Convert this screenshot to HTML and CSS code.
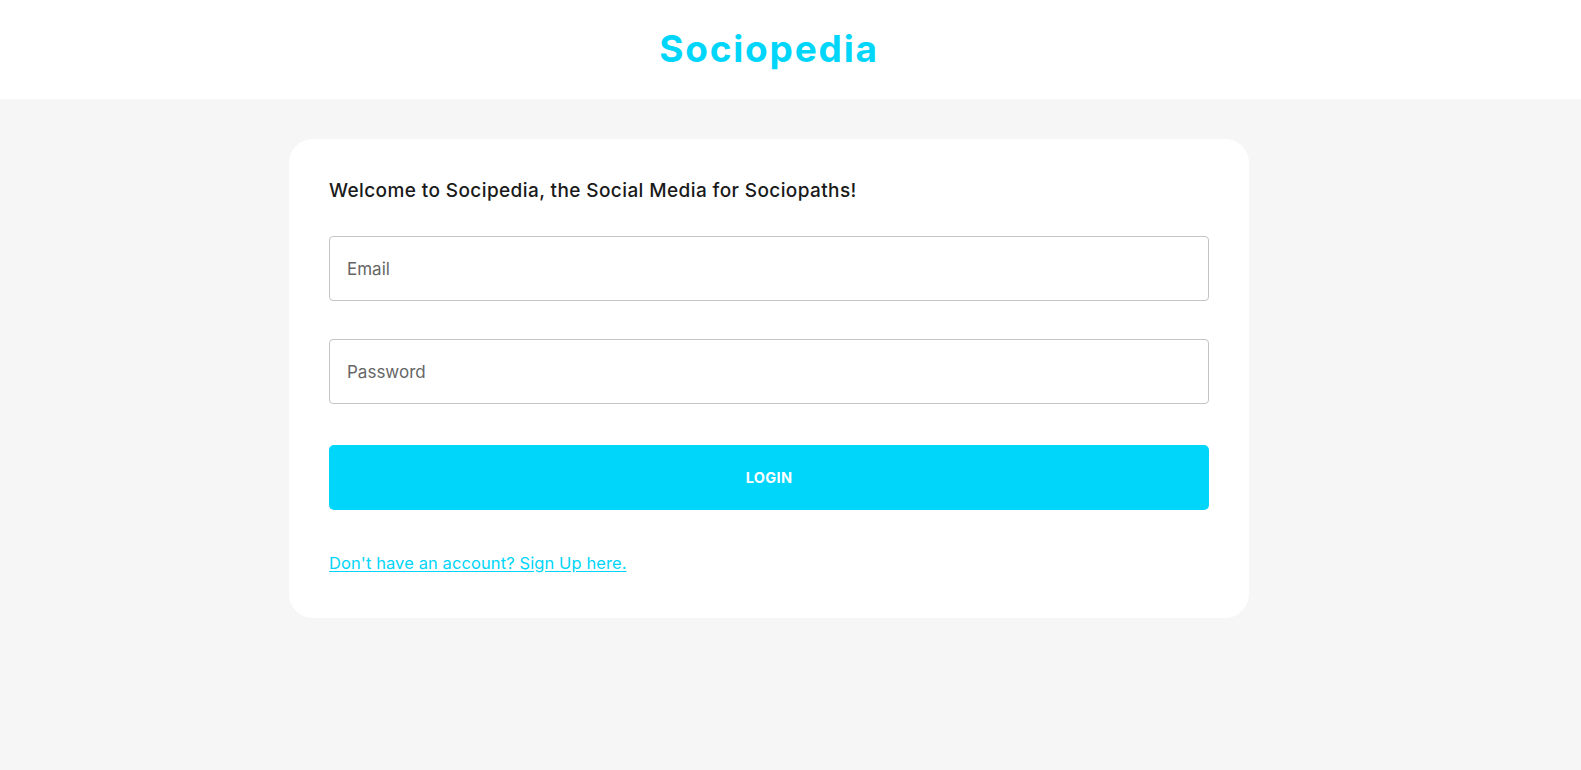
FILE: index.html
```html
<!DOCTYPE html>
<html lang="en">
<head>
<meta charset="utf-8">
<title>Sociopedia</title>
<link rel="stylesheet" href="styles.css">
</head>
<body>
<header class="topbar">
  <div class="topbar-inner">
    <h1 class="brand">Sociopedia</h1>
  </div>
</header>
<main class="page">
  <section class="card">
    <h2 class="welcome">Welcome to Socipedia, the Social Media for Sociopaths!</h2>
    <form class="form">
      <input class="field field-email" type="text" placeholder="Email">
      <input class="field field-password" type="password" placeholder="Password">
      <button class="login" type="button">LOGIN</button>
      <a class="switch" href="#">Don't have an account? Sign Up here.</a>
    </form>
  </section>
</main>
</body>
</html>
```
FILE: styles.css
```css
* { box-sizing: border-box; }
html, body {
  margin: 0;
  padding: 0;
  background: #f6f6f6;
  font-family: Inter, "Noto Sans", sans-serif;
  color: #1a1a1a;
  height: 100%;
}
.topbar {
  background: #ffffff;
  height: 99px;
}
.topbar-inner {
  width: 1538px;
  height: 100%;
  display: flex;
  justify-content: center;
  align-items: center;
}
.brand {
  margin: 0;
  font-size: 37px;
  font-weight: 700;
  color: #00d5fa;
  line-height: 1;
  letter-spacing: 1.8px;
  padding-bottom: 2px;
}
.page {
  width: 1538px;
  padding-top: 40px;
}
.card {
  width: 960px;
  margin: 0 auto;
  background: #ffffff;
  border-radius: 24px;
  padding: 39px 40px 44px;
}
.welcome {
  margin: 0 0 32px;
  font-size: 19px;
  line-height: 26px;
  font-weight: 500;
  letter-spacing: 0.4px;
  color: #1a1a1a;
}
.form {
  display: flex;
  flex-direction: column;
}
.field {
  height: 65px;
  border: 1px solid #c4c4c4;
  border-radius: 4px;
  padding: 0 17px;
  font-family: inherit;
  font-size: 17px;
  color: #1a1a1a;
  background: #fff;
  outline: none;
}
.field::placeholder { color: #666666; opacity: 1; }
.field-email { margin-bottom: 38px; }
.field-password { margin-bottom: 41px; }
.login {
  height: 65px;
  border: none;
  border-radius: 5px;
  background: #00d5fa;
  color: #ffffff;
  font-family: inherit;
  font-size: 14.5px;
  font-weight: 700;
  letter-spacing: 0.3px;
  cursor: pointer;
  margin-bottom: 42px;
}
.switch {
  align-self: flex-start;
  color: #00d5fa;
  font-size: 16.5px;
  line-height: 22px;
  letter-spacing: 0.1px;
  text-decoration: underline;
  text-underline-offset: 2px;
}
```
